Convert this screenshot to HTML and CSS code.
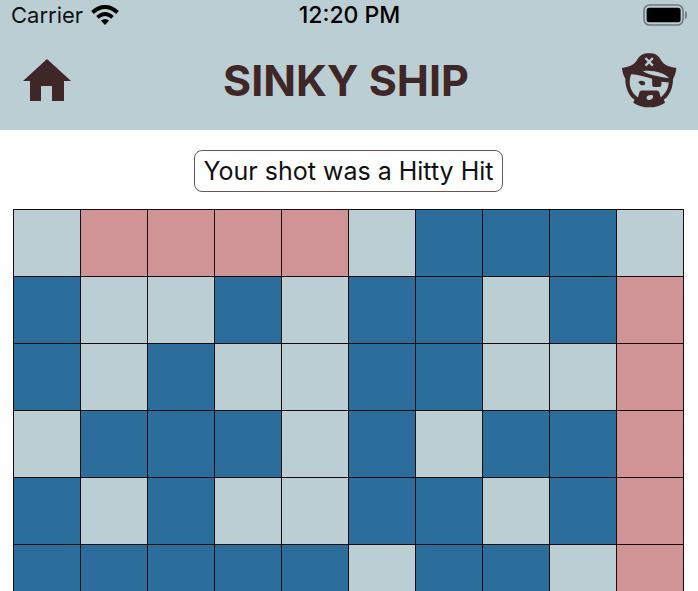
FILE: index.html
```html
<!DOCTYPE html>
<html lang="en">
<head>
<meta charset="utf-8">
<meta name="viewport" content="width=device-width, initial-scale=1">
<title>Sinky Ship</title>
<link rel="stylesheet" href="styles.css">
</head>
<body>
<header class="top">
  <div class="status">
    <div class="carrier">
      <span>Carrier</span>
      <svg class="wifi" viewBox="0 0 28 20" aria-hidden="true">
        <path d="M1.5 7.5Q14 -3.5 26.5 7.5" fill="none" stroke="#000" stroke-width="4"/>
        <path d="M6.5 12.4Q14 5.6 21.5 12.4" fill="none" stroke="#000" stroke-width="3.8"/>
        <path d="M9.8 15.6Q14 12.2 18.2 15.6L14 20Z"/>
      </svg>
    </div>
    <span class="clock">12:20 PM</span>
    <svg class="battery" viewBox="0 0 45 22" aria-hidden="true">
      <rect x="1" y="1" width="39" height="20" rx="5.5" fill="none" stroke="#6d7a7f" stroke-width="1.6"/>
      <rect x="3.6" y="3.8" width="34" height="14.4" rx="2.5"/>
      <path d="M42.6 7.5Q44.6 11 42.6 14.5Z" fill="#6d7a7f" stroke="#6d7a7f"/>
    </svg>
  </div>
  <nav class="bar">
    <button class="icon-button" type="button" aria-label="Home">
      <svg class="home" viewBox="0 0 48 43" aria-hidden="true">
        <path d="M24 0L48 22H41V42H29V27H18V42H7V22H0Z"/>
      </svg>
    </button>
    <h1 class="title">SINKY SHIP</h1>
    <button class="icon-button" type="button" aria-label="Player">
      <svg class="pirate" viewBox="10 9 169 169" aria-hidden="true">
        <path d="M13 57C34 54 50 48 58 34C66 18 78 13 95 13C112 13 123 18 131 34C139 48 155 54 177 57C176 70 172 82 167 90C167 115 158 136 146 148L139 152L143 162C129 172 114 176 95 176C77 176 61 172 47 162L51 152L44 148C30 134 23 112 23 90C18 81 14 70 13 57Z"/>
        <g class="cutout">
          <path d="M76 67C104 62 140 71 155 88C130 84 98 80 76 67Z"/>
          <path d="M41 76C63 77 83 84 104 90V108Q104 115 111 115H125Q132 115 132 108V99L154 101C154 116 147 129 137 139L130 146L125 129Q122 125 116 125H74Q69 125 66 129L61 146L54 140C37 125 31 98 41 76Z"/>
          <path d="M87 146Q90 138 104 139Q110 144 104 150Q96 156 90 152Q86 150 87 146Z"/>
        </g>
        <path d="M62 100Q71 93 80 98Q86 104 80 109Q70 112 62 100Z"/>
        <path class="cross" d="M84 27L106 50M106 27L84 50"/>
      </svg>
    </button>
  </nav>
</header>
<main class="game">
  <p class="message" role="status">Your shot was a Hitty Hit</p>
  <div class="board">
    <button class="cell miss"></button><button class="cell hit"></button><button class="cell hit"></button><button class="cell hit"></button><button class="cell hit"></button><button class="cell miss"></button><button class="cell"></button><button class="cell"></button><button class="cell"></button><button class="cell miss"></button>
    <button class="cell"></button><button class="cell miss"></button><button class="cell miss"></button><button class="cell"></button><button class="cell miss"></button><button class="cell"></button><button class="cell"></button><button class="cell miss"></button><button class="cell"></button><button class="cell hit"></button>
    <button class="cell"></button><button class="cell miss"></button><button class="cell"></button><button class="cell miss"></button><button class="cell miss"></button><button class="cell"></button><button class="cell"></button><button class="cell miss"></button><button class="cell miss"></button><button class="cell hit"></button>
    <button class="cell miss"></button><button class="cell"></button><button class="cell"></button><button class="cell"></button><button class="cell miss"></button><button class="cell"></button><button class="cell miss"></button><button class="cell"></button><button class="cell"></button><button class="cell hit"></button>
    <button class="cell"></button><button class="cell miss"></button><button class="cell"></button><button class="cell miss"></button><button class="cell miss"></button><button class="cell"></button><button class="cell"></button><button class="cell miss"></button><button class="cell"></button><button class="cell hit"></button>
    <button class="cell"></button><button class="cell"></button><button class="cell"></button><button class="cell"></button><button class="cell"></button><button class="cell miss"></button><button class="cell"></button><button class="cell"></button><button class="cell miss"></button><button class="cell hit"></button>
  </div>
</main>
</body>
</html>
```
FILE: styles.css
```css
* {
  box-sizing: border-box;
}

body {
  margin: 0;
  height: 100vh;
  overflow: hidden;
  background: #fff;
  color: #111;
  font-family: Inter, "Liberation Sans", sans-serif;
}

.top {
  background: #bbced4;
}

.status {
  display: grid;
  grid-template-columns: 1fr auto 1fr;
  align-items: center;
  height: 30px;
  padding: 0 10px 0 11px;
  font-size: 22px;
  line-height: 30px;
}

.carrier {
  display: flex;
  align-items: center;
  gap: 8px;
}

.wifi {
  width: 28px;
  height: 20px;
}

.clock {
  color: #000;
  font-size: 23px;
  font-weight: 500;
}

.battery {
  justify-self: end;
  width: 45px;
  height: 22px;
}

.bar {
  display: flex;
  align-items: center;
  justify-content: space-between;
  height: 100px;
  padding: 0 21px 0 23px;
}

.icon-button {
  display: flex;
  align-items: center;
  height: 56px;
  padding: 0;
  border: 0;
  background: none;
  fill: #3f2627;
}

.home {
  width: 48px;
  height: 43px;
}

.pirate {
  width: 56px;
  height: 56px;
}

.cutout {
  fill: #bbced4;
}

.cross {
  fill: none;
  stroke: #bbced4;
  stroke-width: 7;
}

.title {
  margin: 0;
  color: #3f2627;
  font-size: 43px;
  font-weight: 700;
  line-height: 56px;
}

.game {
  display: flex;
  flex-direction: column;
  align-items: center;
  gap: 17px;
  padding: 20px 14px 0 13px;
}

.message {
  margin: 0;
  padding: 0 8px;
  border: 1px solid #6a5557;
  border-radius: 8px;
  font-size: 25px;
  line-height: 40px;
}

.board {
  display: grid;
  grid-template-columns: repeat(10, 1fr);
  gap: 1px;
  width: 100%;
  padding: 1px;
  background: #1a0c0e;
}

.cell {
  aspect-ratio: 1;
  min-width: 0;
  padding: 0;
  border: 0;
  border-radius: 0;
  background: #2c6e9b;
}

.miss {
  background: #bbced4;
}

.hit {
  background: #d19496;
}
```
